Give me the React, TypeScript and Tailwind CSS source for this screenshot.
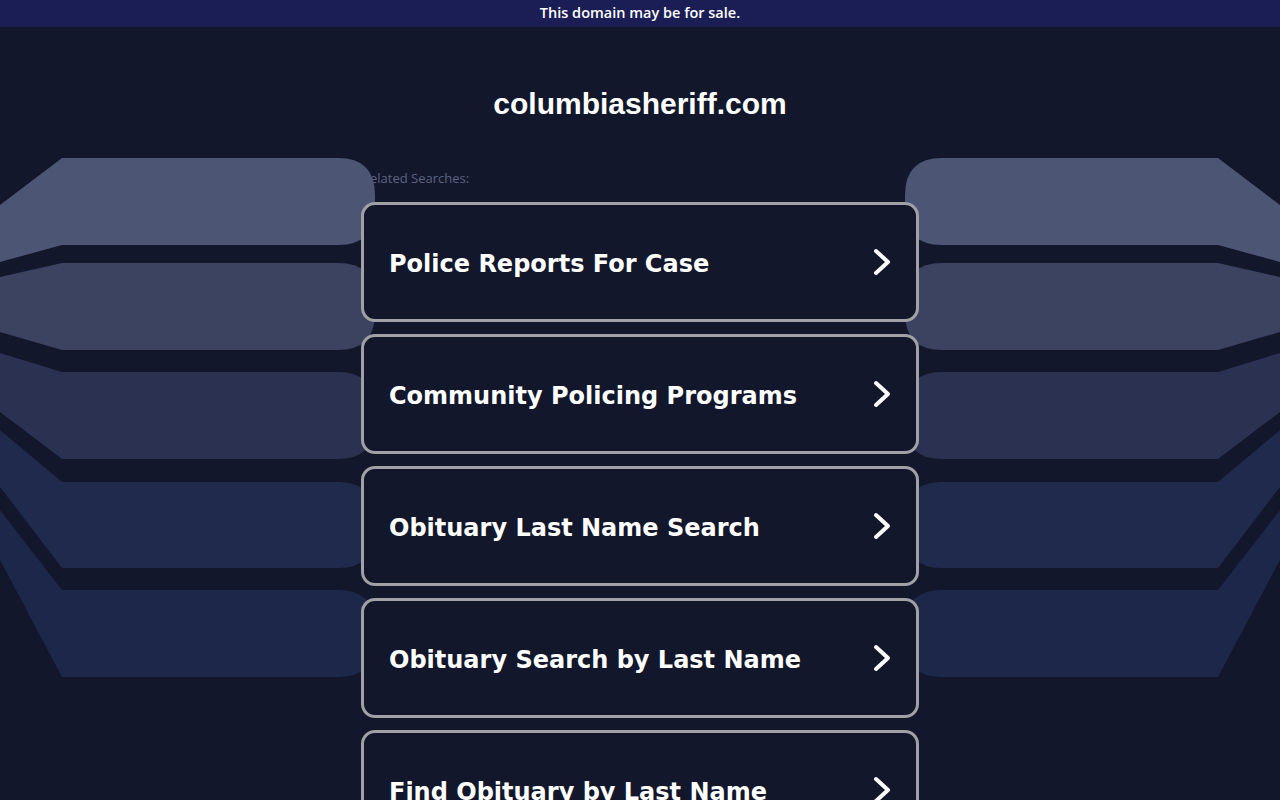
const searches = [
  "Police Reports For Case",
  "Community Policing Programs",
  "Obituary Last Name Search",
  "Obituary Search by Last Name",
  "Find Obituary by Last Name",
];

// left-side band shapes, mirrored for the right side
const bands = [
  { d: "M0,205 L62,158 H338 Q375,158 375,195 V208 Q375,245 338,245 H62 L0,262 Z", fill: "#4c5573" },
  { d: "M0,277 L62,263 H338 Q375,263 375,300 V313 Q375,350 338,350 H62 L0,332 Z", fill: "#3b4361" },
  { d: "M0,353 L62,372 H338 Q375,372 375,409 V422 Q375,459 338,459 H62 L0,412 Z", fill: "#2a3151" },
  { d: "M0,430 L62,482 H338 Q375,482 375,519 V531 Q375,568 338,568 H62 L0,487 Z", fill: "#202a4d" },
  { d: "M0,510 L62,590 H338 Q375,590 375,627 V640 Q375,677 338,677 H62 L0,560 Z", fill: "#1c2749" },
];

function Chevron() {
  return (
    <svg width="18" height="28" viewBox="0 0 18 28" fill="none" className="shrink-0">
      <polyline
        points="3,3 15,14 3,25"
        stroke="#ffffff"
        strokeWidth="4"
        strokeLinecap="round"
        strokeLinejoin="round"
      />
    </svg>
  );
}

export default function App() {
  return (
    <div className="relative h-[800px] overflow-hidden bg-[#12172b]">
      <div className="relative z-20 flex h-[27px] items-center justify-center bg-[#1b1d55] pb-[2px] font-['Open_Sans',sans-serif] text-[14.5px] font-semibold text-white">
        This domain may be for sale.
      </div>

      {/* decorative bands */}
      <svg
        className="pointer-events-none absolute left-0 top-0 z-10 h-[800px] w-[1280px]"
        viewBox="0 0 1280 800"
      >
        {bands.map((b, i) => (
          <path key={`l${i}`} d={b.d} fill={b.fill} />
        ))}
        <g transform="matrix(-1 0 0 1 1280 0)">
          {bands.map((b, i) => (
            <path key={`r${i}`} d={b.d} fill={b.fill} />
          ))}
        </g>
      </svg>

      <div className="mx-auto w-[558px]">
        <h1 className="mt-[59px] text-center font-['Liberation_Sans',Arial,sans-serif] text-[30px] font-bold leading-[36px] text-white">
          columbiasheriff.com
        </h1>
        <p className="mt-[48px] pl-[1px] font-['Open_Sans',sans-serif] text-[13px] leading-[16px] text-[#5d6482]">
          Related Searches:
        </p>
        <div className="relative z-20 mt-[16px] flex flex-col gap-3">
          {searches.map((s) => (
            <div
              key={s}
              className="flex h-[120px] shrink-0 items-center justify-between rounded-[14px] border-[3px] border-[#a0a0a5] bg-[#12172b] px-[25px]"
            >
              <span className="mt-[4px] font-['DejaVu_Sans',Verdana,sans-serif] text-[24px] font-bold text-white">
                {s}
              </span>
              <Chevron />
            </div>
          ))}
        </div>
      </div>
    </div>
  );
}
